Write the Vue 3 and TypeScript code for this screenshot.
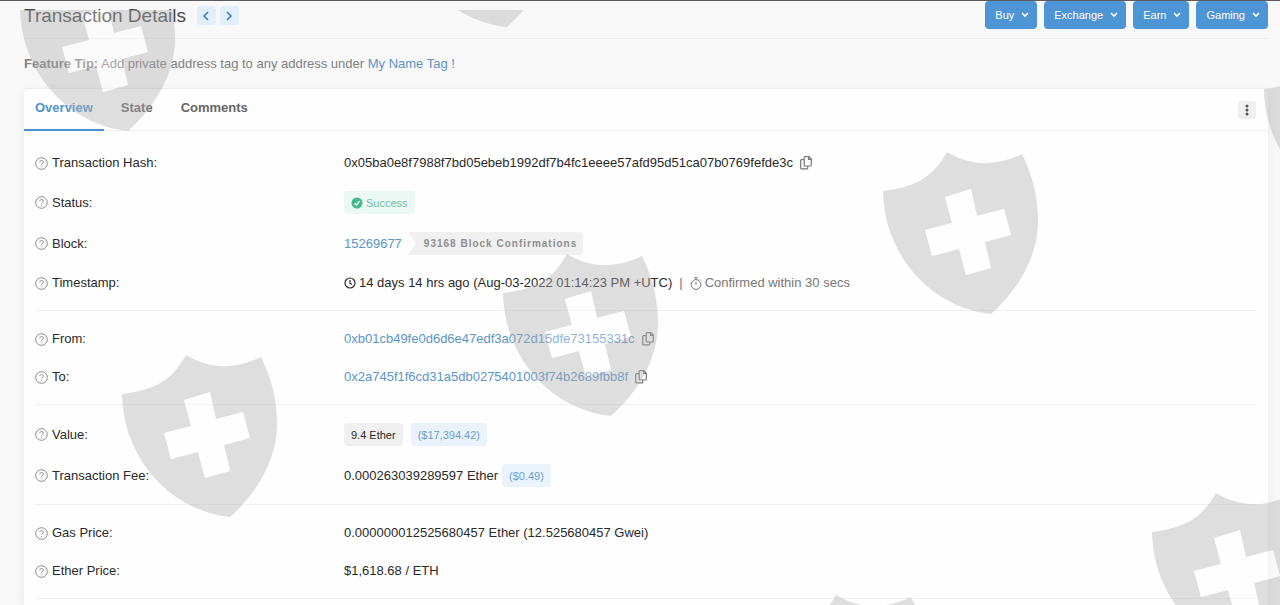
<script setup lang="ts">
import { ref } from 'vue'

type Kind = 'text' | 'hash' | 'status' | 'block' | 'time' | 'address' | 'value' | 'fee'
interface Row {
  label: string
  kind: Kind
  text: string
  extra?: string
}

const menus: string[] = ['Buy', 'Exchange', 'Earn', 'Gaming']
const tabs: string[] = ['Overview', 'State', 'Comments']
const active = ref<string>('Overview')

const groups: Row[][] = [
  [
    { label: 'Transaction Hash:', kind: 'hash', text: '0x05ba0e8f7988f7bd05ebeb1992df7b4fc1eeee57afd95d51ca07b0769fefde3c' },
    { label: 'Status:', kind: 'status', text: 'Success' },
    { label: 'Block:', kind: 'block', text: '15269677', extra: '93168 Block Confirmations' },
    { label: 'Timestamp:', kind: 'time', text: '14 days 14 hrs ago (Aug-03-2022 01:14:23 PM +UTC)', extra: 'Confirmed within 30 secs' },
  ],
  [
    { label: 'From:', kind: 'address', text: '0xb01cb49fe0d6d6e47edf3a072d15dfe73155331c' },
    { label: 'To:', kind: 'address', text: '0x2a745f1f6cd31a5db0275401003f74b2689fbb8f' },
  ],
  [
    { label: 'Value:', kind: 'value', text: '9.4 Ether', extra: '($17,394.42)' },
    { label: 'Transaction Fee:', kind: 'fee', text: '0.000263039289597 Ether', extra: '($0.49)' },
  ],
  [
    { label: 'Gas Price:', kind: 'text', text: '0.000000012525680457 Ether (12.525680457 Gwei)' },
    { label: 'Ether Price:', kind: 'text', text: '$1,618.68 / ETH' },
  ],
]

const tall: Kind[] = ['status', 'block', 'value', 'fee']

const shields: [number, number][] = [
  [17, -33],
  [396, -137],
  [1261, 48],
  [880, 150],
  [500, 252],
  [119, 353],
  [1149, 491],
  [769, 593],
]
</script>

<template>
  <div class="page">
    <header class="head">
      <h1>Transaction Details</h1>
      <nav class="pager" aria-label="Transactions">
        <button type="button" aria-label="Previous">
          <svg width="8" height="10" viewBox="0 0 8 10"><path d="M6 1 2 5l4 4" /></svg>
        </button>
        <button type="button" aria-label="Next">
          <svg width="8" height="10" viewBox="0 0 8 10"><path d="m2 1 4 4-4 4" /></svg>
        </button>
      </nav>
      <div class="menus">
        <button v-for="m in menus" :key="m" type="button">
          {{ m }}
          <svg width="8" height="6" viewBox="0 0 8 6"><path d="m1 1 3 3 3-3" /></svg>
        </button>
      </div>
    </header>

    <p class="tip"><strong>Feature Tip:</strong> Add private address tag to any address under <a href="#tag">My Name Tag !</a></p>

    <main class="card">
      <div class="tabbar">
        <div class="tabs" role="tablist">
          <button
            v-for="t in tabs"
            :key="t"
            type="button"
            role="tab"
            :aria-selected="active === t"
            :class="{ on: active === t }"
            @click="active = t"
          >{{ t }}</button>
        </div>
        <button class="more" type="button" aria-label="More options">
          <svg width="4" height="12" viewBox="0 0 4 12"><circle cx="2" cy="2" r="1.5" /><circle cx="2" cy="6" r="1.5" /><circle cx="2" cy="10" r="1.5" /></svg>
        </button>
      </div>

      <div class="body">
        <dl v-for="(g, i) in groups" :key="i" class="group">
          <div v-for="r in g" :key="r.label" class="row" :class="{ tall: tall.includes(r.kind) }">
            <dt>
              <svg class="help" width="13" height="13" viewBox="0 0 13 13">
                <circle cx="6.5" cy="6.5" r="5.8" />
                <path d="M4.800 5.100c.1-2.200 3.500-2.100 3.500-.1 0 1.300-1.700 1.300-1.700 2.600M6.600 8.900v1" />
              </svg>
              {{ r.label }}
            </dt>
            <dd>
              <template v-if="r.kind === 'status'">
                <span class="badge green">
                  <svg width="12" height="12" viewBox="0 0 12 12"><circle cx="6" cy="6" r="5.500" /><path d="m3.500 6.200 1.800 1.800 3.300-3.700" /></svg>
                  {{ r.text }}
                </span>
              </template>
              <template v-else-if="r.kind === 'block'">
                <a href="#block">{{ r.text }}</a>
                <span class="confirmations">{{ r.extra }}</span>
              </template>
              <template v-else-if="r.kind === 'time'">
                <svg class="clock" width="12" height="12" viewBox="0 0 12 12"><circle cx="6" cy="6" r="5" /><path d="M6 3v3.200l2 1.200" /></svg>
                <span>{{ r.text }}</span>
                <span class="bar">|</span>
                <svg class="watch" width="12" height="13" viewBox="0 0 12 13"><circle cx="6" cy="7.500" r="4.900" /><path d="M4.500.6h3M6 .6v2M6 5v2.800M10 2.500l.9.9" /></svg>
                <span class="muted">{{ r.extra }}</span>
              </template>
              <template v-else-if="r.kind === 'value'">
                <span class="badge grey">{{ r.text }}</span>
                <span class="badge blue spaced">{{ r.extra }}</span>
              </template>
              <template v-else-if="r.kind === 'fee'">
                <span>{{ r.text }}</span>
                <span class="badge blue">{{ r.extra }}</span>
              </template>
              <template v-else>
                <a v-if="r.kind === 'address'" href="#address">{{ r.text }}</a>
                <span v-else>{{ r.text }}</span>
                <button v-if="r.kind !== 'text'" class="copy" type="button" aria-label="Copy">
                  <svg width="12" height="14" viewBox="0 0 12 14">
                    <path d="M4.200 1.600q0-.9.900-.9h3.800l2.400 2.400v6q0 .9-.9.900H5.100q-.9 0-.9-.9zM8.600.7v2.700h2.700M4.200 3.700H1.600q-.9 0-.9.900v7.300q0 .9.900.9h5.200q.9 0 .9-.9V10" />
                  </svg>
                </button>
              </template>
            </dd>
          </div>
        </dl>
      </div>
    </main>

    <div class="watermark" aria-hidden="true">
      <svg width="100%" height="100%">
        <g v-for="([x, y], i) in shields" :key="i" :transform="`translate(${x} ${y - 10})`">
          <path
            class="shield"
            fill-rule="evenodd"
            d="M3 41C34 37 52 29 67 2 90 16 115 17 142 4 154 28 158 50 158 72 158 108 136 142 111 164 52 158 4 106 3 41ZM65 47 91 39 97 66 124 59 131 85 105 92 111 118 86 125 79 99 52 106 45 80 72 73Z"
          />
          <path class="cross" d="M65 47 91 39 97 66 124 59 131 85 105 92 111 118 86 125 79 99 52 106 45 80 72 73Z" />
        </g>
      </svg>
    </div>
  </div>
</template>

<style>
body {
  margin: 0;
}
</style>

<style scoped>
.page {
  position: relative;
  box-sizing: border-box;
  min-height: 100vh;
  display: flex;
  flex-direction: column;
  padding: 0 12px 0 24px;
  border-top: 1px solid #5c5a5c;
  background: #f8f8f8;
  color: #2a2a2a;
  font: 13px/20px "Liberation Sans", Arial, sans-serif;
  overflow: hidden;
}
button {
  font: inherit;
  border: 0;
  margin: 0;
  padding: 0;
  cursor: pointer;
}
svg {
  display: block;
  flex: none;
  fill: none;
}
a {
  color: #5c94c9;
  text-decoration: none;
}
.head {
  display: flex;
  align-items: flex-start;
  height: 37px;
  border-bottom: 1px solid #eeeeee;
}
h1 {
  margin: 0;
  font-size: 19px;
  line-height: 29px;
  font-weight: 400;
  color: #4a4a4a;
}
.pager {
  display: flex;
  gap: 4px;
  margin: 5px 0 0 11px;
}
.pager button {
  display: grid;
  place-items: center;
  width: 19px;
  height: 19px;
  border-radius: 3px;
  background: #e2effa;
}
.pager path {
  stroke: #3f7fc0;
  stroke-width: 1.6;
}
.menus {
  display: flex;
  gap: 7px;
  margin-left: auto;
}
.menus button {
  display: flex;
  align-items: center;
  gap: 7px;
  height: 28px;
  padding: 0 8px 0 10px;
  border-radius: 4px;
  background: #4e95d6;
  color: #fff;
  font-size: 11px;
}
.menus path {
  stroke: #fff;
  stroke-width: 1.6;
}
.tip {
  margin: 15px 0 14px;
  color: #808080;
}
.card {
  flex: 1;
  background: #fefefe;
  border-top: 1px solid #ebebeb;
  border-radius: 4px 4px 0 0;
  box-shadow: 0 4px 10px rgba(80, 100, 120, 0.1);
}
.tabbar {
  display: flex;
  justify-content: space-between;
  align-items: center;
  height: 41px;
  border-bottom: 1px solid #f0f0f0;
}
.tabs {
  display: flex;
  align-self: stretch;
}
.tabs button {
  height: 42px;
  padding: 0 11px 2px;
  margin-right: 6px;
  border-bottom: 2px solid transparent;
  background: none;
  color: #666;
  font-weight: 700;
}
.tabs .on {
  color: #5294d2;
  border-bottom-color: #4a90cc;
}
.more {
  display: grid;
  place-items: center;
  width: 18px;
  height: 18px;
  margin-right: 12px;
  border-radius: 3px;
  background: #efefef;
}
.more circle {
  fill: #555;
}
.body {
  padding: 4px 11px 0;
}
.group {
  margin: 0;
  padding: 9px 0 8px;
  border-bottom: 1px solid #f0f0f0;
}
.row {
  display: grid;
  grid-template-columns: 309px 1fr;
  align-items: center;
  min-height: 38px;
}
.tall {
  min-height: 41px;
}
dt,
dd {
  display: flex;
  align-items: center;
  margin: 0;
  white-space: nowrap;
}
dt {
  gap: 4px;
}
.help circle,
.help path {
  stroke: #8a8a8a;
  stroke-width: 1;
}
.badge {
  display: flex;
  align-items: center;
  gap: 3px;
  height: 23px;
  padding: 0 7px;
  border-radius: 4px;
  font-size: 11px;
}
.green {
  background: #ebf8f4;
  color: #6fc0a2;
}
.green circle {
  fill: #45b98d;
}
.green path {
  stroke: #fff;
  stroke-width: 1.5;
}
.grey {
  background: #f0f0f0;
}
.blue {
  background: #eaf3fc;
  color: #6f9dcc;
  margin-left: 4px;
}
.spaced {
  margin-left: 8px;
}
.confirmations {
  height: 23px;
  margin-left: 6px;
  padding: 0 6px 0 16px;
  border-radius: 0 3px 3px 0;
  background: #f0f0f0;
  clip-path: polygon(0 0, 100% 0, 100% 100%, 0 100%, 8px 50%);
  color: #8e8e8e;
  font-size: 10px;
  font-weight: 700;
  line-height: 23px;
  letter-spacing: 1px;
}
.clock {
  margin-right: 3px;
}
.clock circle,
.clock path {
  stroke: #2a2a2a;
  stroke-width: 1.2;
}
.watch {
  margin-right: 3px;
}
.watch circle,
.watch path {
  stroke: #777;
}
.bar {
  margin: 0 7px;
  color: #777;
}
.muted {
  color: #777;
}
.copy {
  margin-left: 7px;
  background: none;
}
.copy path {
  stroke: #777;
  stroke-width: 1.2;
}
.watermark {
  position: absolute;
  inset: 9px 0 0;
  overflow: hidden;
  pointer-events: none;
}
.shield {
  fill: rgba(176, 176, 176, 0.4);
}
.cross {
  fill: rgba(255, 255, 255, 0.3);
}
</style>
